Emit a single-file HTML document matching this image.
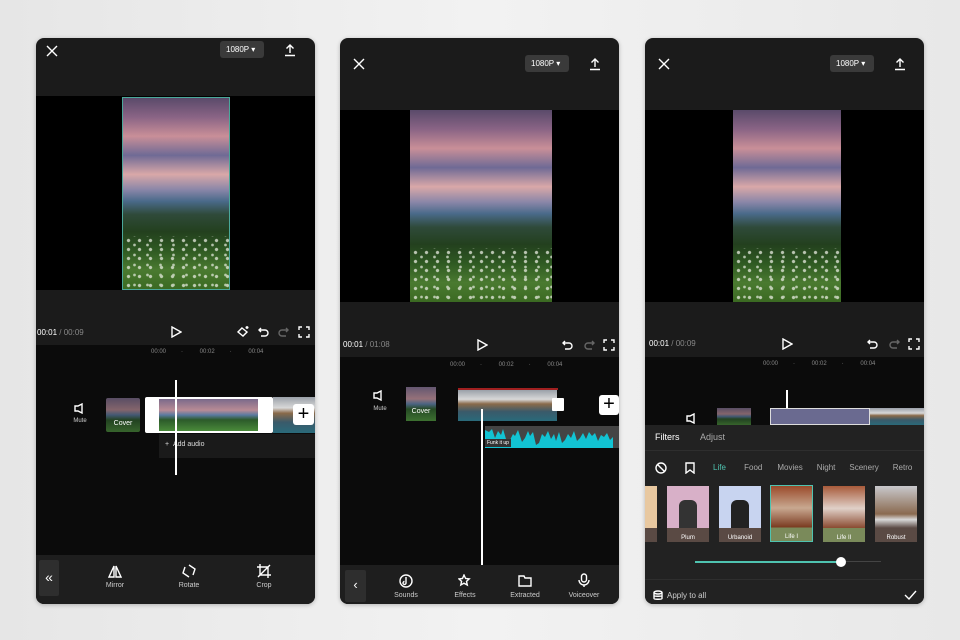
<!DOCTYPE html>
<html><head><meta charset="utf-8"><style>
*{margin:0;padding:0;box-sizing:border-box}
body{width:960px;height:640px;background:linear-gradient(90deg,#e6e6e6,#f2f2f2 50%,#e8e8e8);position:relative;overflow:hidden;font-family:"Liberation Sans",sans-serif;color:#fff}
.ph{position:absolute;width:279px;height:566px;top:38px;border-radius:8px;overflow:hidden;background:#1b1b1b;box-shadow:0 1px 4px rgba(0,0,0,.25)}
.a{position:absolute}
.img{position:absolute;background:
linear-gradient(180deg,#5a4a6a 0%,#8a6485 10%,#c98f98 20%,#6f6a95 30%,#d9a8a8 40%,#8a86a8 48%,#4a6a8a 54%,#2f4a3a 61%,#23401e 70%,#2f5a22 80%,#4a7a30 90%,#3b6a22 100%)}
.img:after{content:"";position:absolute;left:0;right:0;bottom:0;height:28%;background:
radial-gradient(circle,#e8ece0 1.3px,transparent 2px) 0 0/11px 9px,
radial-gradient(circle,#dfe6d8 1px,transparent 1.8px) 5px 4px/13px 10px;opacity:.75}
.t{font-size:8px;color:#fff}
.g{color:#888}
.res{position:absolute;background:#3a3a3a;border-radius:3px;font-size:8px;padding:4px 6px;width:44px;height:17px}
.tl{background:#0b0b0b}
.bar{background:#1e1e1e}
.ic{position:absolute;fill:none;stroke:#fff;stroke-width:1.4}
.lab{position:absolute;font-size:7px;color:#ccc;text-align:center;width:60px}
.thumb{position:absolute;background:linear-gradient(180deg,#7a6a8a,#b88b95 35%,#5a7aa0 50%,#2c5a2a 65%,#4a8a3a)}
.thumb2{position:absolute;background:linear-gradient(180deg,#9aa0a8,#d8d8d8 30%,#8a6a4a 45%,#3a5a6a 70%,#2a6a7a)}
</style></head><body>

<!-- Phone 1 -->
<div class="ph" style="left:36px">
 <svg class="ic" style="left:9px;top:6px" width="14" height="14" viewBox="0 0 14 14"><path d="M2 2L12 12M12 2L2 12"/></svg>
 <div class="res" style="left:184px;top:3px">1080P ▾</div>
 <svg class="ic" style="left:247px;top:5px" width="14" height="14" viewBox="0 0 14 14"><path d="M7 10V2M3.5 5.5L7 2l3.5 3.5M2 12.5h10"/></svg>
 <div class="a" style="left:0;top:58px;width:279px;height:194px;background:#000"></div>
 <div class="img" style="left:86px;top:59px;width:108px;height:193px;border:1px solid #4aa89a"></div>
 <div class="a t" style="left:1px;top:290px">00:01 <span class="g">/ 00:09</span></div>
 <svg class="ic" style="left:134px;top:288px" width="12" height="12" viewBox="0 0 12 12"><path d="M2 1l9 5-9 5z"/></svg>
 <svg class="ic" style="left:200px;top:287px" width="14" height="13" viewBox="0 0 14 13"><path d="M6 3l5 4-4 4-5-4zM11 1v3M9.5 2.5h3"/></svg>
 <svg class="ic" style="left:222px;top:288px" width="12" height="12" viewBox="0 0 12 12"><path d="M3 2L1 4l2 2M1 4h6a3 3 0 010 6H3"/></svg>
 <svg class="ic" style="left:241px;top:288px;stroke:#666" width="12" height="12" viewBox="0 0 12 12"><path d="M9 2l2 2-2 2M11 4H5a3 3 0 000 6h4"/></svg>
 <svg class="ic" style="left:262px;top:288px" width="12" height="12" viewBox="0 0 12 12"><path d="M1 4V1h3M8 1h3v3M11 8v3H8M4 11H1V8"/></svg>
 <div class="a tl" style="left:0;top:307px;width:279px;height:210px"></div>
 <div class="a g" style="left:115px;top:311px;font-size:6px">00:00 &nbsp; &nbsp; &nbsp; &nbsp; · &nbsp; &nbsp; &nbsp; &nbsp; &nbsp;00:02 &nbsp; &nbsp; &nbsp; &nbsp; · &nbsp; &nbsp; &nbsp; &nbsp; &nbsp;00:04</div>
 <svg class="ic" style="left:38px;top:365px" width="12" height="11" viewBox="0 0 12 11"><path d="M1 3h3l4-2v9L4 8H1z"/></svg>
 <div class="lab" style="left:14px;top:380px;font-size:6px">Mute</div>
 <div class="thumb" style="left:70px;top:360px;width:34px;height:34px;border-radius:2px;opacity:.7"></div>
 <div class="lab" style="left:57px;top:382px;color:#fff">Cover</div>
 <div class="a" style="left:109px;top:359px;width:128px;height:36px;background:#fff;border-radius:2px"></div>
 <div class="thumb" style="left:123px;top:361px;width:99px;height:32px"></div>
 <div class="thumb2" style="left:237px;top:359px;width:42px;height:36px"></div>
 <div class="a" style="left:257px;top:366px;width:21px;height:21px;background:#fff;border-radius:3px;color:#000;font-size:20px;line-height:20px;text-align:center">+</div>
 <div class="a" style="left:123px;top:396px;width:156px;height:24px;background:#1a1a1a;font-size:7px;padding:7px 6px;color:#ddd">+ &nbsp;Add audio</div>
 <div class="a" style="left:139px;top:342px;width:2px;height:95px;background:#fff"></div>
 <div class="a bar" style="left:0;top:517px;width:279px;height:49px"></div>
 <div class="a" style="left:3px;top:522px;width:20px;height:36px;background:#2e2e2e;border-radius:2px;font-size:14px;text-align:center;line-height:34px">«</div>
 <svg class="ic" style="left:72px;top:527px" width="14" height="14" viewBox="0 0 14 14"><path d="M6 1L1 12h5zM8 1l5 11H8z"/></svg>
 <div class="lab" style="left:49px;top:544px">Mirror</div>
 <svg class="ic" style="left:146px;top:526px" width="14" height="14" viewBox="0 0 14 14"><path d="M7 1l6 4-2 6M7 13l-6-4 2-6"/></svg>
 <div class="lab" style="left:123px;top:544px">Rotate</div>
 <svg class="ic" style="left:221px;top:526px" width="14" height="14" viewBox="0 0 14 14"><path d="M3 0v11h11M0 3h11v11M1 13L13 1"/></svg>
 <div class="lab" style="left:198px;top:544px">Crop</div>
</div>

<!-- Phone 2 -->
<div class="ph" style="left:340px">
 <svg class="ic" style="left:12px;top:19px" width="14" height="14" viewBox="0 0 14 14"><path d="M2 2L12 12M12 2L2 12"/></svg>
 <div class="res" style="left:185px;top:17px">1080P ▾</div>
 <svg class="ic" style="left:248px;top:19px" width="14" height="14" viewBox="0 0 14 14"><path d="M7 10V2M3.5 5.5L7 2l3.5 3.5M2 12.5h10"/></svg>
 <div class="a" style="left:0;top:72px;width:279px;height:192px;background:#000"></div>
 <div class="img" style="left:70px;top:72px;width:142px;height:192px"></div>
 <div class="a t" style="left:3px;top:302px">00:01 <span class="g">/ 01:08</span></div>
 <svg class="ic" style="left:136px;top:301px" width="12" height="12" viewBox="0 0 12 12"><path d="M2 1l9 5-9 5z"/></svg>
 <svg class="ic" style="left:222px;top:301px" width="12" height="12" viewBox="0 0 12 12"><path d="M3 2L1 4l2 2M1 4h6a3 3 0 010 6H3"/></svg>
 <svg class="ic" style="left:243px;top:301px;stroke:#666" width="12" height="12" viewBox="0 0 12 12"><path d="M9 2l2 2-2 2M11 4H5a3 3 0 000 6h4"/></svg>
 <svg class="ic" style="left:263px;top:301px" width="12" height="12" viewBox="0 0 12 12"><path d="M1 4V1h3M8 1h3v3M11 8v3H8M4 11H1V8"/></svg>
 <div class="a tl" style="left:0;top:319px;width:279px;height:208px"></div>
 <div class="a g" style="left:110px;top:324px;font-size:6px">00:00 &nbsp; &nbsp; &nbsp; &nbsp; · &nbsp; &nbsp; &nbsp; &nbsp; &nbsp;00:02 &nbsp; &nbsp; &nbsp; &nbsp; · &nbsp; &nbsp; &nbsp; &nbsp; &nbsp;00:04</div>
 <svg class="ic" style="left:33px;top:352px" width="12" height="11" viewBox="0 0 12 11"><path d="M1 3h3l4-2v9L4 8H1z"/></svg>
 <div class="lab" style="left:10px;top:368px;font-size:6px">Mute</div>
 <div class="thumb" style="left:66px;top:349px;width:30px;height:34px;opacity:.8"></div>
 <div class="lab" style="left:51px;top:370px;color:#fff">Cover</div>
 <div class="a" style="left:118px;top:350px;width:100px;height:2px;background:#a02020"></div>
 <div class="thumb2" style="left:118px;top:352px;width:99px;height:31px"></div>
 <div class="a" style="left:212px;top:360px;width:12px;height:13px;background:#fff;border-radius:1px"></div>
 <div class="a" style="left:259px;top:357px;width:20px;height:20px;background:#fff;border-radius:3px;color:#000;font-size:20px;line-height:19px;text-align:center">+</div>
 <svg class="a" style="left:145px;top:388px" width="134" height="22" viewBox="0 0 134 22"><rect width="134" height="22" fill="#444"/><path fill="#12c3d3" d="M0 22V4l4 2 3-3 3 9 3-7 3 4 2-6 3 10 3 3 4-8 2 2 3-6 4 12 3-4 3-7 2 5 3-4 3 13 3-2 3-9 3 3 3-6 3 8 3-5 2 7 3-9 3 11 3-3 3-6 3 4 3-7 3 10 3-3 3-5 3 6 3-7 3 4 3-3 3 8 3-6 3 2 3-4 3 7 3-3V22z"/></svg>
 <div class="a" style="left:145px;top:401px;font-size:5px;background:#333;padding:1px 2px">Funk it up</div>
 <div class="a" style="left:141px;top:371px;width:1.5px;height:188px;background:#fff"></div>
 <div class="a bar" style="left:0;top:527px;width:279px;height:39px"></div>
 <div class="a" style="left:5px;top:532px;width:21px;height:32px;background:#2e2e2e;border-radius:2px;font-size:13px;text-align:center;line-height:30px">‹</div>
 <svg class="ic" style="left:59px;top:536px" width="14" height="14" viewBox="0 0 14 14"><circle cx="7" cy="7" r="6"/><path d="M7 3v6M7 9a1.5 1.5 0 11-1.5-1.5"/></svg>
 <div class="lab" style="left:36px;top:554px">Sounds</div>
 <svg class="ic" style="left:118px;top:536px" width="14" height="14" viewBox="0 0 14 14"><path d="M6 1l1.6 3.5 3.6.4-2.7 2.5.8 3.6L6 9.2 2.8 11l.8-3.6L1 5l3.5-.5z"/></svg>
 <div class="lab" style="left:95px;top:554px">Effects</div>
 <svg class="ic" style="left:178px;top:536px" width="14" height="14" viewBox="0 0 14 14"><path d="M1 2h5l1 2h6v8H1z"/></svg>
 <div class="lab" style="left:155px;top:554px">Extracted</div>
 <svg class="ic" style="left:238px;top:535px" width="12" height="15" viewBox="0 0 12 15"><rect x="3.5" y="1" width="5" height="8" rx="2.5"/><path d="M1 7a5 5 0 0010 0M6 12v2"/></svg>
 <div class="lab" style="left:214px;top:554px">Voiceover</div>
</div>

<!-- Phone 3 -->
<div class="ph" style="left:645px">
 <svg class="ic" style="left:12px;top:19px" width="14" height="14" viewBox="0 0 14 14"><path d="M2 2L12 12M12 2L2 12"/></svg>
 <div class="res" style="left:185px;top:17px">1080P ▾</div>
 <svg class="ic" style="left:248px;top:19px" width="14" height="14" viewBox="0 0 14 14"><path d="M7 10V2M3.5 5.5L7 2l3.5 3.5M2 12.5h10"/></svg>
 <div class="a" style="left:0;top:72px;width:279px;height:192px;background:#000"></div>
 <div class="img" style="left:88px;top:72px;width:108px;height:192px"></div>
 <div class="a t" style="left:4px;top:301px">00:01 <span class="g">/ 00:09</span></div>
 <svg class="ic" style="left:136px;top:300px" width="12" height="12" viewBox="0 0 12 12"><path d="M2 1l9 5-9 5z"/></svg>
 <svg class="ic" style="left:222px;top:300px" width="12" height="12" viewBox="0 0 12 12"><path d="M3 2L1 4l2 2M1 4h6a3 3 0 010 6H3"/></svg>
 <svg class="ic" style="left:243px;top:300px;stroke:#666" width="12" height="12" viewBox="0 0 12 12"><path d="M9 2l2 2-2 2M11 4H5a3 3 0 000 6h4"/></svg>
 <svg class="ic" style="left:263px;top:300px" width="12" height="12" viewBox="0 0 12 12"><path d="M1 4V1h3M8 1h3v3M11 8v3H8M4 11H1V8"/></svg>
 <div class="a tl" style="left:0;top:319px;width:279px;height:68px"></div>
 <div class="a g" style="left:118px;top:323px;font-size:6px">00:00 &nbsp; &nbsp; &nbsp; &nbsp; · &nbsp; &nbsp; &nbsp; &nbsp; &nbsp;00:02 &nbsp; &nbsp; &nbsp; &nbsp; · &nbsp; &nbsp; &nbsp; &nbsp; &nbsp;00:04</div>
 <div class="a" style="left:141px;top:352px;width:1.5px;height:35px;background:#fff"></div>
 <svg class="ic" style="left:41px;top:375px" width="12" height="11" viewBox="0 0 12 11"><path d="M1 3h3l4-2v9L4 8H1z"/></svg>
 <div class="thumb" style="left:72px;top:370px;width:34px;height:17px;opacity:.7"></div>
 <div class="a" style="left:125px;top:370px;width:100px;height:17px;border:1px solid #ddd;background:#6a6a90"></div>
 <div class="thumb2" style="left:225px;top:370px;width:54px;height:17px"></div>
 <div class="a" style="left:0;top:387px;width:279px;height:179px;background:#222"></div>
 <div class="a" style="left:10px;top:394px;font-size:9px">Filters</div>
 <div class="a" style="left:55px;top:394px;font-size:9px;color:#aaa">Adjust</div>
 <div class="a" style="left:0;top:412px;width:279px;height:1px;background:#2e2e2e"></div>
 <svg class="ic" style="left:10px;top:424px" width="12" height="12" viewBox="0 0 12 12"><circle cx="6" cy="6" r="5"/><path d="M2.5 2.5l7 7"/></svg>
 <svg class="ic" style="left:40px;top:424px" width="10" height="12" viewBox="0 0 10 12"><path d="M1 1h8v10L5 8l-4 3z"/></svg>
 <div class="a" style="left:68px;top:425px;font-size:8px;color:#4fc3b0;white-space:nowrap">Life <span style="color:#aaa;margin-left:16px">Food</span><span style="color:#aaa;margin-left:15px">Movies</span><span style="color:#aaa;margin-left:14px">Night</span><span style="color:#aaa;margin-left:14px">Scenery</span><span style="color:#aaa;margin-left:14px">Retro</span></div>
 <div class="a" style="left:0;top:448px;width:12px;height:56px;background:linear-gradient(#e8c8a0 75%,#5a4a44 75%)"></div>
 <div class="a" style="left:22px;top:448px;width:42px;height:56px;background:linear-gradient(#d8b0c8 75%,#5a4a44 75%)"><div style="position:absolute;left:12px;top:14px;width:18px;height:28px;background:#333;border-radius:6px 6px 0 0"></div><div class="a" style="bottom:1px;width:42px;text-align:center;font-size:6px">Plum</div></div>
 <div class="a" style="left:74px;top:448px;width:42px;height:56px;background:linear-gradient(#c8d4f0 75%,#5a4a44 75%)"><div style="position:absolute;left:12px;top:14px;width:18px;height:28px;background:#222;border-radius:6px 6px 0 0"></div><div class="a" style="bottom:1px;width:42px;text-align:center;font-size:6px">Urbanoid</div></div>
 <div class="a" style="left:125px;top:447px;width:43px;height:57px;border:1px solid #4fc3b0;background:linear-gradient(#9a4a2a 0,#c8a890 40%,#7a3a20 75%,#7a8a5a 75%)"><div class="a" style="bottom:1px;width:41px;text-align:center;font-size:6px">Life I</div></div>
 <div class="a" style="left:178px;top:448px;width:42px;height:56px;background:linear-gradient(#a85a3a 0,#e0d0c8 40%,#8a4a30 75%,#7a8a5a 75%)"><div class="a" style="bottom:1px;width:42px;text-align:center;font-size:6px">Life II</div></div>
 <div class="a" style="left:230px;top:448px;width:42px;height:56px;background:linear-gradient(#c8c8cc 0,#8a6a50 50%,#d8d8d8 60%,#5a4a44 75%)"><div class="a" style="bottom:1px;width:42px;text-align:center;font-size:6px">Robust</div></div>
 <div class="a" style="left:50px;top:523px;width:146px;height:2px;background:#4fc3b0"></div>
 <div class="a" style="left:196px;top:523px;width:40px;height:1px;background:#444"></div>
 <div class="a" style="left:191px;top:519px;width:10px;height:10px;background:#fff;border-radius:50%"></div>
 <div class="a" style="left:0;top:541px;width:279px;height:1px;background:#2e2e2e"></div>
 <svg class="ic" style="left:8px;top:552px" width="10" height="11" viewBox="0 0 10 11"><ellipse cx="5" cy="2.5" rx="4" ry="1.5"/><path d="M1 2.5v6c0 1 8 1 8 0v-6M1 5.5c0 1 8 1 8 0"/></svg>
 <div class="a" style="left:22px;top:553px;font-size:8px;color:#ccc">Apply to all</div>
 <svg class="ic" style="left:259px;top:552px" width="13" height="10" viewBox="0 0 13 10"><path d="M1 5l4 4 7-8"/></svg>
</div>
</body></html>
